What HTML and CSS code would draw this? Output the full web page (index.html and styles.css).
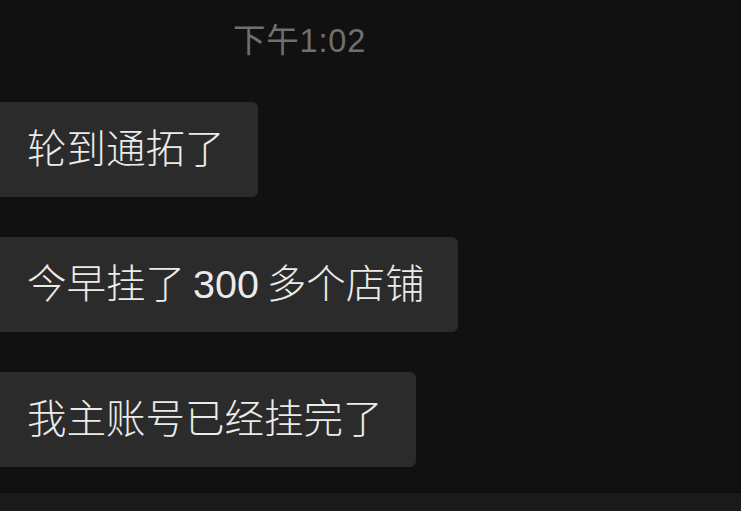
FILE: index.html
```html
<!DOCTYPE html>
<html>
  <head>
    <title>聊天</title>
    <meta name="viewport" content="width=device-width, initial-scale=1">
    <link rel="stylesheet" href="styles.css">
  </head>
  <body>
    <div class="chat">
      <div class="time">下午1:02</div>
      <div class="bubble">轮到通拓了</div>
      <div class="bubble tight">今早挂了 300 多个店铺</div>
      <div class="bubble">我主账号已经挂完了</div>
    </div>
    <div class="bottom"></div>
  </body>
</html>
```

FILE: styles.css
```css
html, body{
  margin:0;
  padding:0;
  height:100%;
  }
body{
  background:#111111;
  font-family:"Liberation Sans", "Noto Sans CJK SC", sans-serif;
  overflow:hidden;
  display:flex;
  flex-direction:column;
  }
.chat{
  flex:1;
  display:flex;
  flex-direction:column;
  align-items:flex-start;
  gap:40px;
  padding-top:21px;
  }
.time{
  margin-left:233px;
  font-size:32.5px;
  letter-spacing:0.8px;
  line-height:40px;
  color:#6f6f6f;
  margin-bottom:1px;
  }
.bubble{
  background:#2b2b2b;
  color:#ebebeb;
  font-size:39.5px;
  font-weight:300;
  line-height:49px;
  padding:23px 33px 23px 27px;
  border-radius:0 6px 6px 0;
  }
.tight{
  word-spacing:-3px;
  }
.bottom{
  height:18px;
  background:#1a1a1a;
  border-top:1px solid #0c0c0c;
  }
```
